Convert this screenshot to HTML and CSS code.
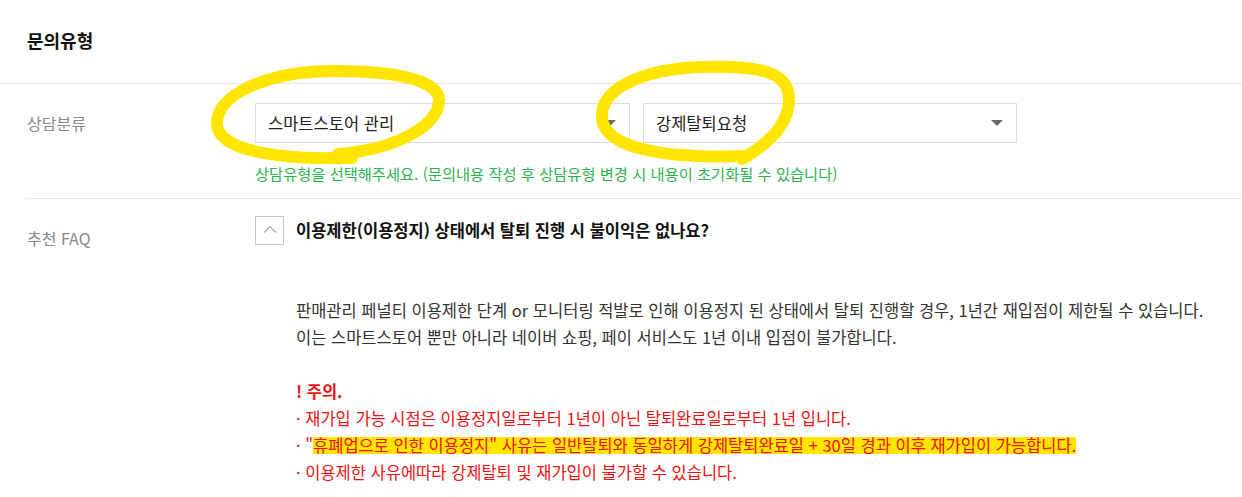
FILE: index.html
```html
<!DOCTYPE html>
<html lang="ko">
<head>
<meta charset="utf-8">
<link rel="stylesheet" href="styles.css">
</head>
<body>
<div class="page">
  <header class="head">
    <h2 class="title">문의유형</h2>
  </header>
  <section class="form">
    <div class="row row-type">
      <div class="label">상담분류</div>
      <div class="field">
        <div class="selects">
          <div class="select"><span>스마트스토어 관리</span><i class="caret"></i></div>
          <div class="select"><span>강제탈퇴요청</span><i class="caret"></i></div>
        </div>
        <p class="help">상담유형을 선택해주세요. (문의내용 작성 후 상담유형 변경 시 내용이 초기화될 수 있습니다)</p>
      </div>
    </div>
    <div class="row row-faq">
      <div class="label label-faq">추천 FAQ</div>
      <div class="field">
        <div class="faq-q">
          <button class="toggle" type="button" aria-label="접기">
            <svg width="14" height="8" viewBox="0 0 14 8"><path d="M1 7.5 L7 1.5 L13 7.5" fill="none" stroke="#a8a8a8" stroke-width="1.2"/></svg>
          </button>
          <strong>이용제한(이용정지) 상태에서 탈퇴 진행 시 불이익은 없나요?</strong>
        </div>
        <div class="faq-a">
          <p>판매관리 페널티 이용제한 단계 or 모니터링 적발로 인해 이용정지 된 상태에서 탈퇴 진행할 경우, 1년간 재입점이 제한될 수 있습니다.<br>이는 스마트스토어 뿐만 아니라 네이버 쇼핑, 페이 서비스도 1년 이내 입점이 불가합니다.</p>
          <p class="warn"><strong>! 주의.</strong><br>· 재가입 가능 시점은 이용정지일로부터 1년이 아닌 탈퇴완료일로부터 1년 입니다.<br>· "<span class="hl">휴폐업으로 인한 이용정지" 사유는 일반탈퇴와 동일하게 강제탈퇴완료일 + 30일 경과 이후 재가입이 가능합니다.</span><br>· 이용제한 사유에따라 강제탈퇴 및 재가입이 불가할 수 있습니다.</p>
        </div>
      </div>
    </div>
  </section>
  <svg class="marks" width="1242" height="497" viewBox="0 0 1242 497">
    <path d="M352 158 C 275 160, 218 150, 217 124 C 216 94, 268 72, 330 71 C 392 70, 439 80, 439 100 C 439 124, 400 149, 338 154" fill="none" stroke="#ffe500" stroke-width="12" stroke-linecap="round"/>
    <path d="M748 156 C 662 159, 606 148, 602 119 C 599 89, 642 69, 702 67 C 760 65, 789 72, 789 99 C 789 124, 770 143, 742 159" fill="none" stroke="#ffe500" stroke-width="12" stroke-linecap="round"/>
  </svg>
</div>
</body>
</html>
```

FILE: styles.css
```css
* { box-sizing: border-box; }
html, body { margin: 0; padding: 0; background: #fff; }
body {
  font-family: "Noto Sans CJK KR", "Noto Sans", sans-serif;
  color: #222;
  width: 1242px;
  height: 497px;
  overflow: hidden;
}
.page { position: relative; }
.head {
  height: 84px;
  display: flex;
  align-items: center;
  padding-left: 27px;
  border-bottom: 1px solid #e4e4e4;
}
.title {
  margin: 0;
  font-size: 18px;
  font-weight: 700;
  color: #111;
  line-height: 1;
  padding-bottom: 3px;
}
.form { margin-left: 25px; }
.row {
  display: flex;
}
.row-type {
  padding-top: 19px;
  padding-bottom: 15px;
  border-bottom: 1px solid #e8e8e8;
}
.label {
  width: 230px;
  flex: none;
  padding-left: 2px;
  font-size: 16px;
  color: #888;
  line-height: 40px;
}
.label-faq { padding-top: 11px; line-height: 22px; }
.field { flex: 1; }
.selects { display: flex; gap: 13px; }
.select {
  width: 375px;
  height: 40px;
  border: 1px solid #dedede;
  display: flex;
  align-items: center;
  justify-content: space-between;
  padding: 0 13px 0 12px;
  font-size: 16.5px;
  color: #222;
}
.select + .select { width: 374px; }
.select span { padding-bottom: 1px; }
.caret {
  width: 0; height: 0;
  border-left: 6px solid transparent;
  border-right: 6px solid transparent;
  border-top: 6px solid #6b6b6b;
}
.help {
  margin: 20px 0 0;
  font-size: 15.3px;
  line-height: 20px;
  color: #2bb24c;
}
.row-faq { padding-top: 17px; }
.faq-q {
  display: flex;
  align-items: center;
  gap: 12px;
}
.toggle {
  width: 29px; height: 29px;
  border: 1px solid #c6c6c6;
  background: #fff;
  padding: 0;
  display: flex;
  align-items: center;
  justify-content: center;
  padding-bottom: 3px;
}
.faq-q strong {
  font-size: 16.5px;
  font-weight: 700;
  color: #111;
  margin-top: -1px;
}
.faq-a {
  padding-left: 41px;
  padding-top: 52px;
  font-size: 16.5px;
  line-height: 27px;
  color: #333;
}
.faq-a p { margin: 0 0 27px; }
.warn { color: #ee1111; }
.warn strong { font-weight: 700; }
.hl {
  background: linear-gradient(to bottom, transparent 18%, #ffe500 18%, #ffe500 88%, transparent 88%);
}
.marks {
  position: absolute;
  top: 0; left: 0;
  pointer-events: none;
}
```
